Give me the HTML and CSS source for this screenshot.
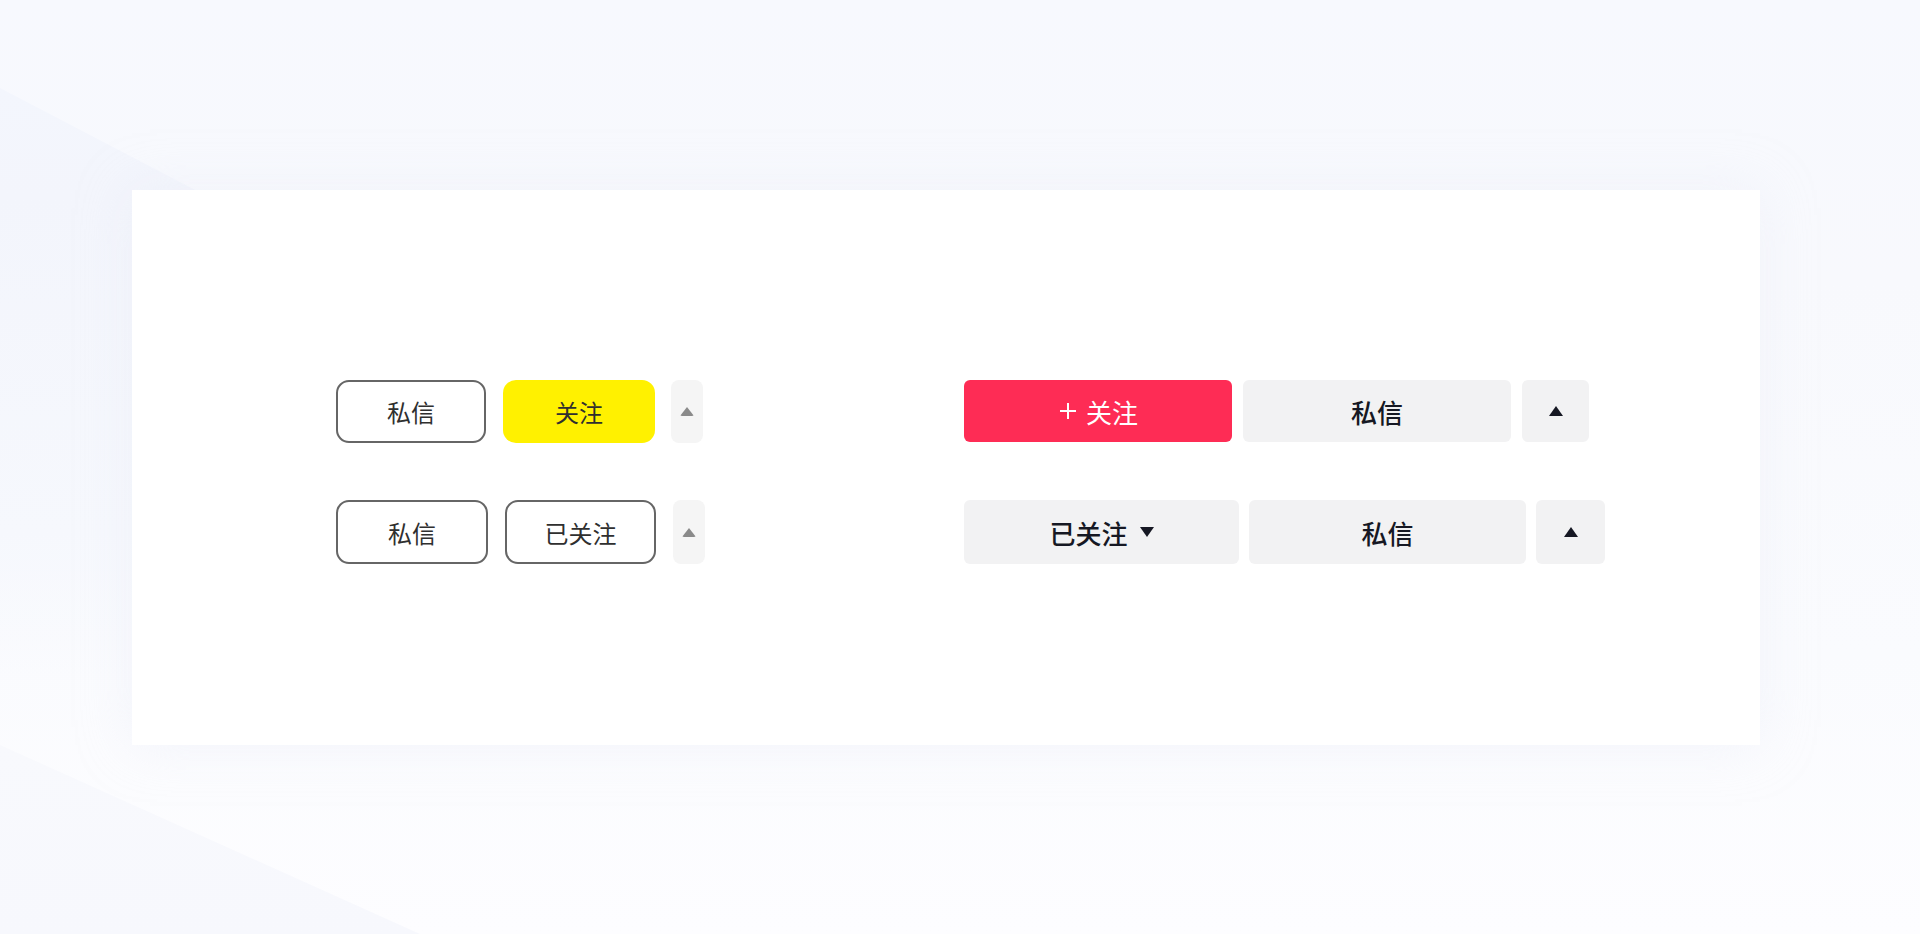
FILE: index.html
```html
<!DOCTYPE html>
<html lang="zh-CN">
<head>
<meta charset="utf-8">
<title>关注按钮</title>
<link rel="stylesheet" href="styles.css">
</head>
<body>
<div class="deco deco-tl"></div>
<div class="deco deco-side"></div>
<div class="deco deco-bl"></div>
<main class="stage">
  <section class="card">
    <div class="group group-left">
      <div class="row row-a">
        <button class="btn outline w150">私信</button>
        <button class="btn yellow w152">关注</button>
        <button class="btn mini"><span class="tri-up grey"></span></button>
      </div>
      <div class="row row-b">
        <button class="btn outline w152">私信</button>
        <button class="btn outline w151">已关注</button>
        <button class="btn mini"><span class="tri-up grey"></span></button>
      </div>
    </div>
    <div class="group group-right">
      <div class="row row-c">
        <button class="btn red w268"><svg class="plus" width="20" height="20" viewBox="0 0 20 20"><path d="M10 2v16M2 10h16" stroke="#fff" stroke-width="2" fill="none"/></svg>关注</button>
        <button class="btn soft w268">私信</button>
        <button class="btn soft w67"><span class="tri-up dark"></span></button>
      </div>
      <div class="row row-d">
        <button class="btn soft w275">已关注<span class="tri-down dark"></span></button>
        <button class="btn soft w277">私信</button>
        <button class="btn soft w69"><span class="tri-up dark"></span></button>
      </div>
    </div>
  </section>
</main>
</body>
</html>
```

FILE: styles.css
```css
html, body {
  margin: 0;
  padding: 0;
}
body {
  width: 1920px;
  height: 934px;
  overflow: hidden;
  position: relative;
  background: linear-gradient(180deg, #f7f9fe 0%, #f8f9fd 30%, #fafbfe 70%, #fdfdff 100%);
  font-family: "Noto Sans CJK SC", "Noto Sans", sans-serif;
}
.deco {
  position: absolute;
  pointer-events: none;
}
.deco-tl {
  left: 0;
  top: 88px;
  width: 200px;
  height: 110px;
  background: linear-gradient(180deg, #f3f6fd 0%, #f3f5fc 100%);
  clip-path: polygon(0 0, 100% 95%, 100% 100%, 0 100%);
}
.deco-side {
  left: 0;
  top: 196px;
  width: 132px;
  height: 480px;
  background: linear-gradient(180deg, #f3f5fc 0%, #f6f8fd 70%, rgba(248, 249, 253, 0) 100%);
}
.deco-bl {
  left: 0;
  top: 745px;
  width: 420px;
  height: 189px;
  background: linear-gradient(180deg, #f8f9fd 0%, #f7f8fd 100%);
  clip-path: polygon(0 0, 0 100%, 100% 100%);
}
.stage {
  position: relative;
  padding: 190px 0 0 132px;
}
.card {
  width: 1628px;
  height: 555px;
  background: #ffffff;
  box-shadow: 0 0 50px rgba(228, 232, 244, 0.35);
  box-sizing: border-box;
  padding: 190px 0 0 204px;
  display: flex;
}
.group {
  display: flex;
  flex-direction: column;
  gap: 57px;
}
.group-left {
  width: 628px;
}
.row {
  display: flex;
  align-items: flex-start;
}
.row-a { gap: 17px; height: 63px; }
.row-b { gap: 17px; height: 64px; }
.row-c { gap: 11px; height: 62px; }
.row-d { gap: 10px; height: 64px; margin-top: 1px; }
.row-a .mini { margin-left: -1px; }

.btn {
  font-family: "Noto Sans CJK SC", "Noto Sans", sans-serif;
  border: none;
  margin: 0;
  padding: 0;
  display: flex;
  align-items: center;
  justify-content: center;
  box-sizing: border-box;
  cursor: pointer;
}
.group-left .btn {
  font-size: 24px;
  color: #2f2f2f;
  font-weight: 400;
  border-radius: 13px;
}
.row-a .btn { height: 63px; }
.row-b .btn { height: 64px; }
.outline {
  background: #fff;
  border: 2px solid #666666;
}
.yellow {
  background: #fff100;
  color: #222;
  border-radius: 14px;
}
.mini {
  width: 32px;
  background: #f5f5f5;
  border-radius: 8px !important;
}
.w150 { width: 150px; }
.w151 { width: 151px; }
.w152 { width: 152px; }

.group-right .btn {
  font-size: 26px;
  font-weight: 500;
  color: #161823;
  border-radius: 6px;
}
.row-c .btn { height: 62px; }
.row-d .btn { height: 64px; }
.red {
  background: #fe2c55;
  color: #fff !important;
  gap: 8px;
  font-weight: 400 !important;
}
.soft {
  background: #f2f2f3;
}
.w268 { width: 268px; }
.w67 { width: 67px; }
.w275 { width: 275px; }
.w277 { width: 277px; }
.w69 { width: 69px; }
.plus {
  display: block;
}

.tri-up, .tri-down {
  display: inline-block;
  width: 0;
  height: 0;
}
.tri-up.grey {
  border-left: 7px solid transparent;
  border-right: 7px solid transparent;
  border-bottom: 9px solid #8a8a8a;
  border-radius: 2px;
}
.tri-up.dark {
  border-left: 7px solid transparent;
  border-right: 7px solid transparent;
  border-bottom: 10px solid #161823;
}
.tri-down.dark {
  border-left: 7px solid transparent;
  border-right: 7px solid transparent;
  border-top: 10px solid #161823;
  margin-left: 12px;
}
```
